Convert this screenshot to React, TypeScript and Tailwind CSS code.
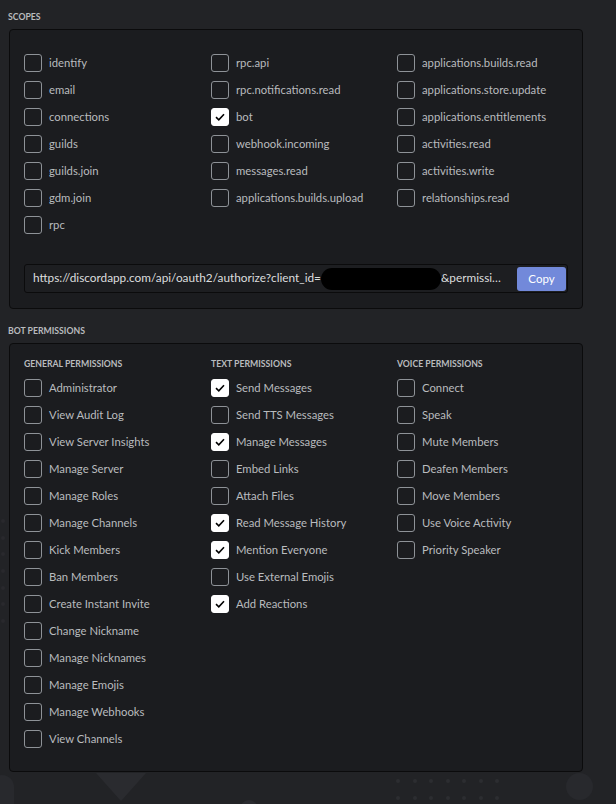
import { useState } from "react";

type Item = { label: string; checked?: boolean };

const SCOPES: Item[][] = [
  [
    { label: "identify" },
    { label: "email" },
    { label: "connections" },
    { label: "guilds" },
    { label: "guilds.join" },
    { label: "gdm.join" },
    { label: "rpc" },
  ],
  [
    { label: "rpc.api" },
    { label: "rpc.notifications.read" },
    { label: "bot", checked: true },
    { label: "webhook.incoming" },
    { label: "messages.read" },
    { label: "applications.builds.upload" },
  ],
  [
    { label: "applications.builds.read" },
    { label: "applications.store.update" },
    { label: "applications.entitlements" },
    { label: "activities.read" },
    { label: "activities.write" },
    { label: "relationships.read" },
  ],
];

const PERMISSIONS: { title: string; items: Item[] }[] = [
  {
    title: "General Permissions",
    items: [
      { label: "Administrator" },
      { label: "View Audit Log" },
      { label: "View Server Insights" },
      { label: "Manage Server" },
      { label: "Manage Roles" },
      { label: "Manage Channels" },
      { label: "Kick Members" },
      { label: "Ban Members" },
      { label: "Create Instant Invite" },
      { label: "Change Nickname" },
      { label: "Manage Nicknames" },
      { label: "Manage Emojis" },
      { label: "Manage Webhooks" },
      { label: "View Channels" },
    ],
  },
  {
    title: "Text Permissions",
    items: [
      { label: "Send Messages", checked: true },
      { label: "Send TTS Messages" },
      { label: "Manage Messages", checked: true },
      { label: "Embed Links" },
      { label: "Attach Files" },
      { label: "Read Message History", checked: true },
      { label: "Mention Everyone", checked: true },
      { label: "Use External Emojis" },
      { label: "Add Reactions", checked: true },
    ],
  },
  {
    title: "Voice Permissions",
    items: [
      { label: "Connect" },
      { label: "Speak" },
      { label: "Mute Members" },
      { label: "Deafen Members" },
      { label: "Move Members" },
      { label: "Use Voice Activity" },
      { label: "Priority Speaker" },
    ],
  },
];

function CheckRow({ label, checked }: Item) {
  const [on, setOn] = useState(!!checked);
  return (
    <label className="flex h-[27px] items-center gap-[7px] cursor-pointer select-none">
      <span
        onClick={() => setOn(!on)}
        className={
          on
            ? "flex h-[18px] w-[18px] shrink-0 items-center justify-center rounded-[3px] border border-white bg-white"
            : "flex h-[18px] w-[18px] shrink-0 items-center justify-center rounded-[3px] border border-[#8e9297]"
        }
      >
        {on && (
          <svg width="10" height="8" viewBox="0 0 10 8">
            <path d="M1 4.2 L3.8 6.8 L9 1.2" fill="none" stroke="#000" strokeWidth="1.6" />
          </svg>
        )}
      </span>
      <span className="translate-y-[1px] whitespace-nowrap text-[11.3px] text-[#b9bbbe]">{label}</span>
    </label>
  );
}

function SectionLabel({ children }: { children: string }) {
  return (
    <div className="h-[12px] text-[8.7px] font-bold uppercase leading-[12px] text-[#b9bbbe]">
      {children}
    </div>
  );
}

export default function App() {
  return (
    <div
      className="relative h-[804px] overflow-hidden bg-[#222326] pl-[8px] pt-[11px]"
      style={{ fontFamily: "Lato, 'Open Sans', sans-serif" }}
    >
      {/* background decoration */}
      <div className="absolute left-[-10px] top-[775px] h-[48px] w-[24px] rounded-full bg-[#28292d]" />
      <div className="absolute left-[96px] top-[773px] h-0 w-0 border-x-[25px] border-t-[28px] border-x-transparent border-t-[#2a2b2f]" />
      <div className="absolute left-[240px] top-[800px] h-[18px] w-[18px] rounded-full bg-[#2a2b2f]" />
      <div className="absolute left-[566px] top-[773px] h-[27px] w-[27px] rounded-full bg-[#28292d]" />
      <div className="absolute left-[396px] top-[779px] grid grid-cols-7 gap-x-[12.5px] gap-y-[12.5px]">
        {Array.from({ length: 14 }).map((_, i) => (
          <span key={i} className="h-[4px] w-[4px] rounded-full bg-[#2c2d31]" />
        ))}
      </div>
      <div className="absolute left-[1px] top-[519px] flex flex-col gap-[12.7px]">
        {Array.from({ length: 7 }).map((_, i) => (
          <span key={i} className="h-[4px] w-[4px] rounded-full bg-[#29292d]" />
        ))}
      </div>

      <div className="relative w-[575px]">
        <SectionLabel>Scopes</SectionLabel>

        <div className="mt-[6px] ml-[1px] rounded-[4px] border border-[#0b0b0c] bg-[#1b1c1f] px-[14px] pb-[15px] pt-[19px]">
          <div className="grid grid-cols-[187px_186px_1fr]">
            {SCOPES.map((col, i) => (
              <div key={i} className="flex flex-col">
                {col.map((it) => (
                  <CheckRow key={it.label} {...it} />
                ))}
              </div>
            ))}
          </div>

          <div className="mt-[26px] flex h-[29px] items-center gap-[12px] rounded-[3px] border border-[#0b0b0c] bg-[#1d1e21] pl-[8px] pr-[1px]">
            <div className="min-w-0 flex-1 overflow-hidden text-ellipsis whitespace-nowrap text-[11.8px] text-[#dcddde]">
              https://discordapp.com/api/oauth2/authorize?client_id=
              <span className="inline-block h-[22px] w-[120px] rounded-[11px] bg-black align-middle" />
              &permissions=268823632&scope=bot
            </div>
            <button className="h-[24px] w-[49px] shrink-0 rounded-[3px] bg-[#7289da] text-[11.5px] text-white">
              Copy
            </button>
          </div>
        </div>

        <div className="mt-[16px]">
          <SectionLabel>Bot Permissions</SectionLabel>
        </div>

        <div className="mt-[6px] ml-[1px] rounded-[4px] border border-[#0b0b0c] bg-[#1b1c1f] px-[14px] pb-[19px] pt-[14px]">
          <div className="grid grid-cols-[187px_186px_1fr]">
            {PERMISSIONS.map((group) => (
              <div key={group.title} className="flex flex-col">
                <SectionLabel>{group.title}</SectionLabel>
                <div className="mt-[4px] flex flex-col">
                  {group.items.map((it) => (
                    <CheckRow key={it.label} {...it} />
                  ))}
                </div>
              </div>
            ))}
          </div>
        </div>
      </div>
    </div>
  );
}
